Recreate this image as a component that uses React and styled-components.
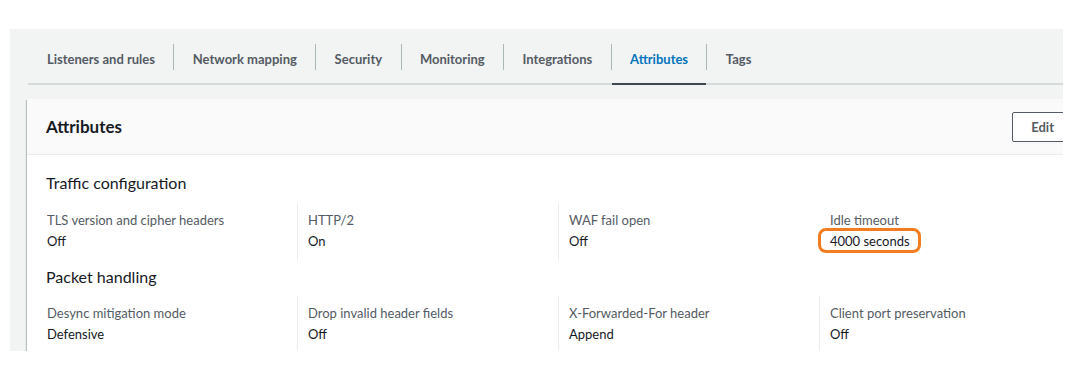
import React from "react";
import styled, { createGlobalStyle } from "styled-components";

const Global = createGlobalStyle`
  html, body { margin: 0; padding: 0; background: #ffffff; }
  body { font-family: Lato, "Liberation Sans", Arial, sans-serif; color: #16191f; }
  * { box-sizing: border-box; }
`;

const Page = styled.div`
  padding: 29px 10px 0 10px;
  height: 380px;
`;

const Panel = styled.div`
  background: #f2f3f3;
  height: 322px;
  overflow: hidden;
  padding-left: 17px;
`;

const TabList = styled.div`
  display: flex;
  align-items: flex-end;
  margin-left: 1px;
  border-bottom: 2px solid #d5dbdb;
  width: 1100px;
`;

const Tab = styled.div`
  padding: 17px 0 11px;
  margin-bottom: -2px;
  border-bottom: 2px solid ${(p) => (p.$active ? "#414750" : "transparent")};
`;

const TabLabel = styled.span`
  display: block;
  padding: 0 18.4px 0 ${(p) => (p.$first ? "19px" : "18.4px")};
  line-height: 26px;
  font-size: 13px;
  font-weight: 700;
  color: ${(p) => (p.$active ? "#0073bb" : "#545b64")};
  white-space: nowrap;
`;

const TabDivider = styled.span`
  width: 1px;
  height: 26px;
  margin-bottom: 13px;
  background: #aab7b8;
  flex: none;
`;

const Card = styled.section`
  margin-top: 14px;
  width: 1066px;
  background: #ffffff;
  box-shadow: -1px 1px 1px 0 rgba(0, 28, 36, 0.2), 0 1px 1px 0 rgba(0, 28, 36, 0.3);
`;

const CardHeader = styled.header`
  display: flex;
  align-items: center;
  justify-content: space-between;
  height: 56px;
  padding: 0 20px 0 19px;
  background: #fafafa;
  border-bottom: 1px solid #eaeded;
`;

const CardTitle = styled.h2`
  margin: 0;
  font-size: 17px;
  font-weight: 700;
  color: #16191f;
`;

const Button = styled.button`
  height: 30px;
  padding: 0 18px;
  background: #ffffff;
  border: 1px solid #545b64;
  border-radius: 2px;
  font-family: inherit;
  font-size: 13px;
  font-weight: 700;
  color: #545b64;
`;

const CardBody = styled.div`
  padding: 17px 20px 20px 19px;
`;

const SectionTitle = styled.h3`
  margin: ${(p) => (p.$first ? "0 0 9px" : "6px 0 8px")};
  font-size: 16px;
  font-weight: 400;
  line-height: 22px;
  color: #16191f;
`;

const Grid = styled.div`
  display: grid;
  grid-template-columns: repeat(4, 261px);
  margin-left: -10px;
`;

const Cell = styled.div`
  padding: 7px 0 9px 10px;
  border-left: 1px solid ${(p) => (p.$divider ? "#eaeded" : "transparent")};
`;

const Label = styled.div`
  font-size: 13px;
  line-height: 20px;
  color: #545b64;
`;

const Value = styled.div`
  margin-top: 1px;
  font-size: 13px;
  line-height: 20px;
  color: #16191f;
`;

const Highlighted = styled.span`
  position: relative;
  display: inline-block;
  &::after {
    content: "";
    position: absolute;
    top: -3px;
    bottom: -2px;
    left: -12px;
    right: -11px;
    border: 3px solid #f47c20;
    border-radius: 8px;
  }
`;

const tabs = [
  "Listeners and rules",
  "Network mapping",
  "Security",
  "Monitoring",
  "Integrations",
  "Attributes",
  "Tags",
];

const sections = [
  {
    title: "Traffic configuration",
    items: [
      { label: "TLS version and cipher headers", value: "Off" },
      { label: "HTTP/2", value: "On" },
      { label: "WAF fail open", value: "Off" },
      { label: "Idle timeout", value: "4000 seconds", highlight: true, noDivider: true },
    ],
  },
  {
    title: "Packet handling",
    items: [
      { label: "Desync mitigation mode", value: "Defensive" },
      { label: "Drop invalid header fields", value: "Off" },
      { label: "X-Forwarded-For header", value: "Append" },
      { label: "Client port preservation", value: "Off" },
    ],
  },
];

export default function App() {
  return (
    <>
      <Global />
      <Page>
        <Panel>
          <TabList>
            {tabs.map((t, i) => (
              <React.Fragment key={t}>
                {i > 0 && <TabDivider />}
                <Tab $active={t === "Attributes"}>
                  <TabLabel $first={i === 0} $active={t === "Attributes"}>
                    {t}
                  </TabLabel>
                </Tab>
              </React.Fragment>
            ))}
          </TabList>
          <Card>
            <CardHeader>
              <CardTitle>Attributes</CardTitle>
              <Button>Edit</Button>
            </CardHeader>
            <CardBody>
              {sections.map((s, si) => (
                <React.Fragment key={s.title}>
                  <SectionTitle $first={si === 0}>{s.title}</SectionTitle>
                  <Grid>
                    {s.items.map((it, i) => (
                      <Cell key={it.label} $divider={i > 0 && !it.noDivider}>
                        <Label>{it.label}</Label>
                        <Value>
                          {it.highlight ? <Highlighted>{it.value}</Highlighted> : it.value}
                        </Value>
                      </Cell>
                    ))}
                  </Grid>
                </React.Fragment>
              ))}
            </CardBody>
          </Card>
        </Panel>
      </Page>
    </>
  );
}
